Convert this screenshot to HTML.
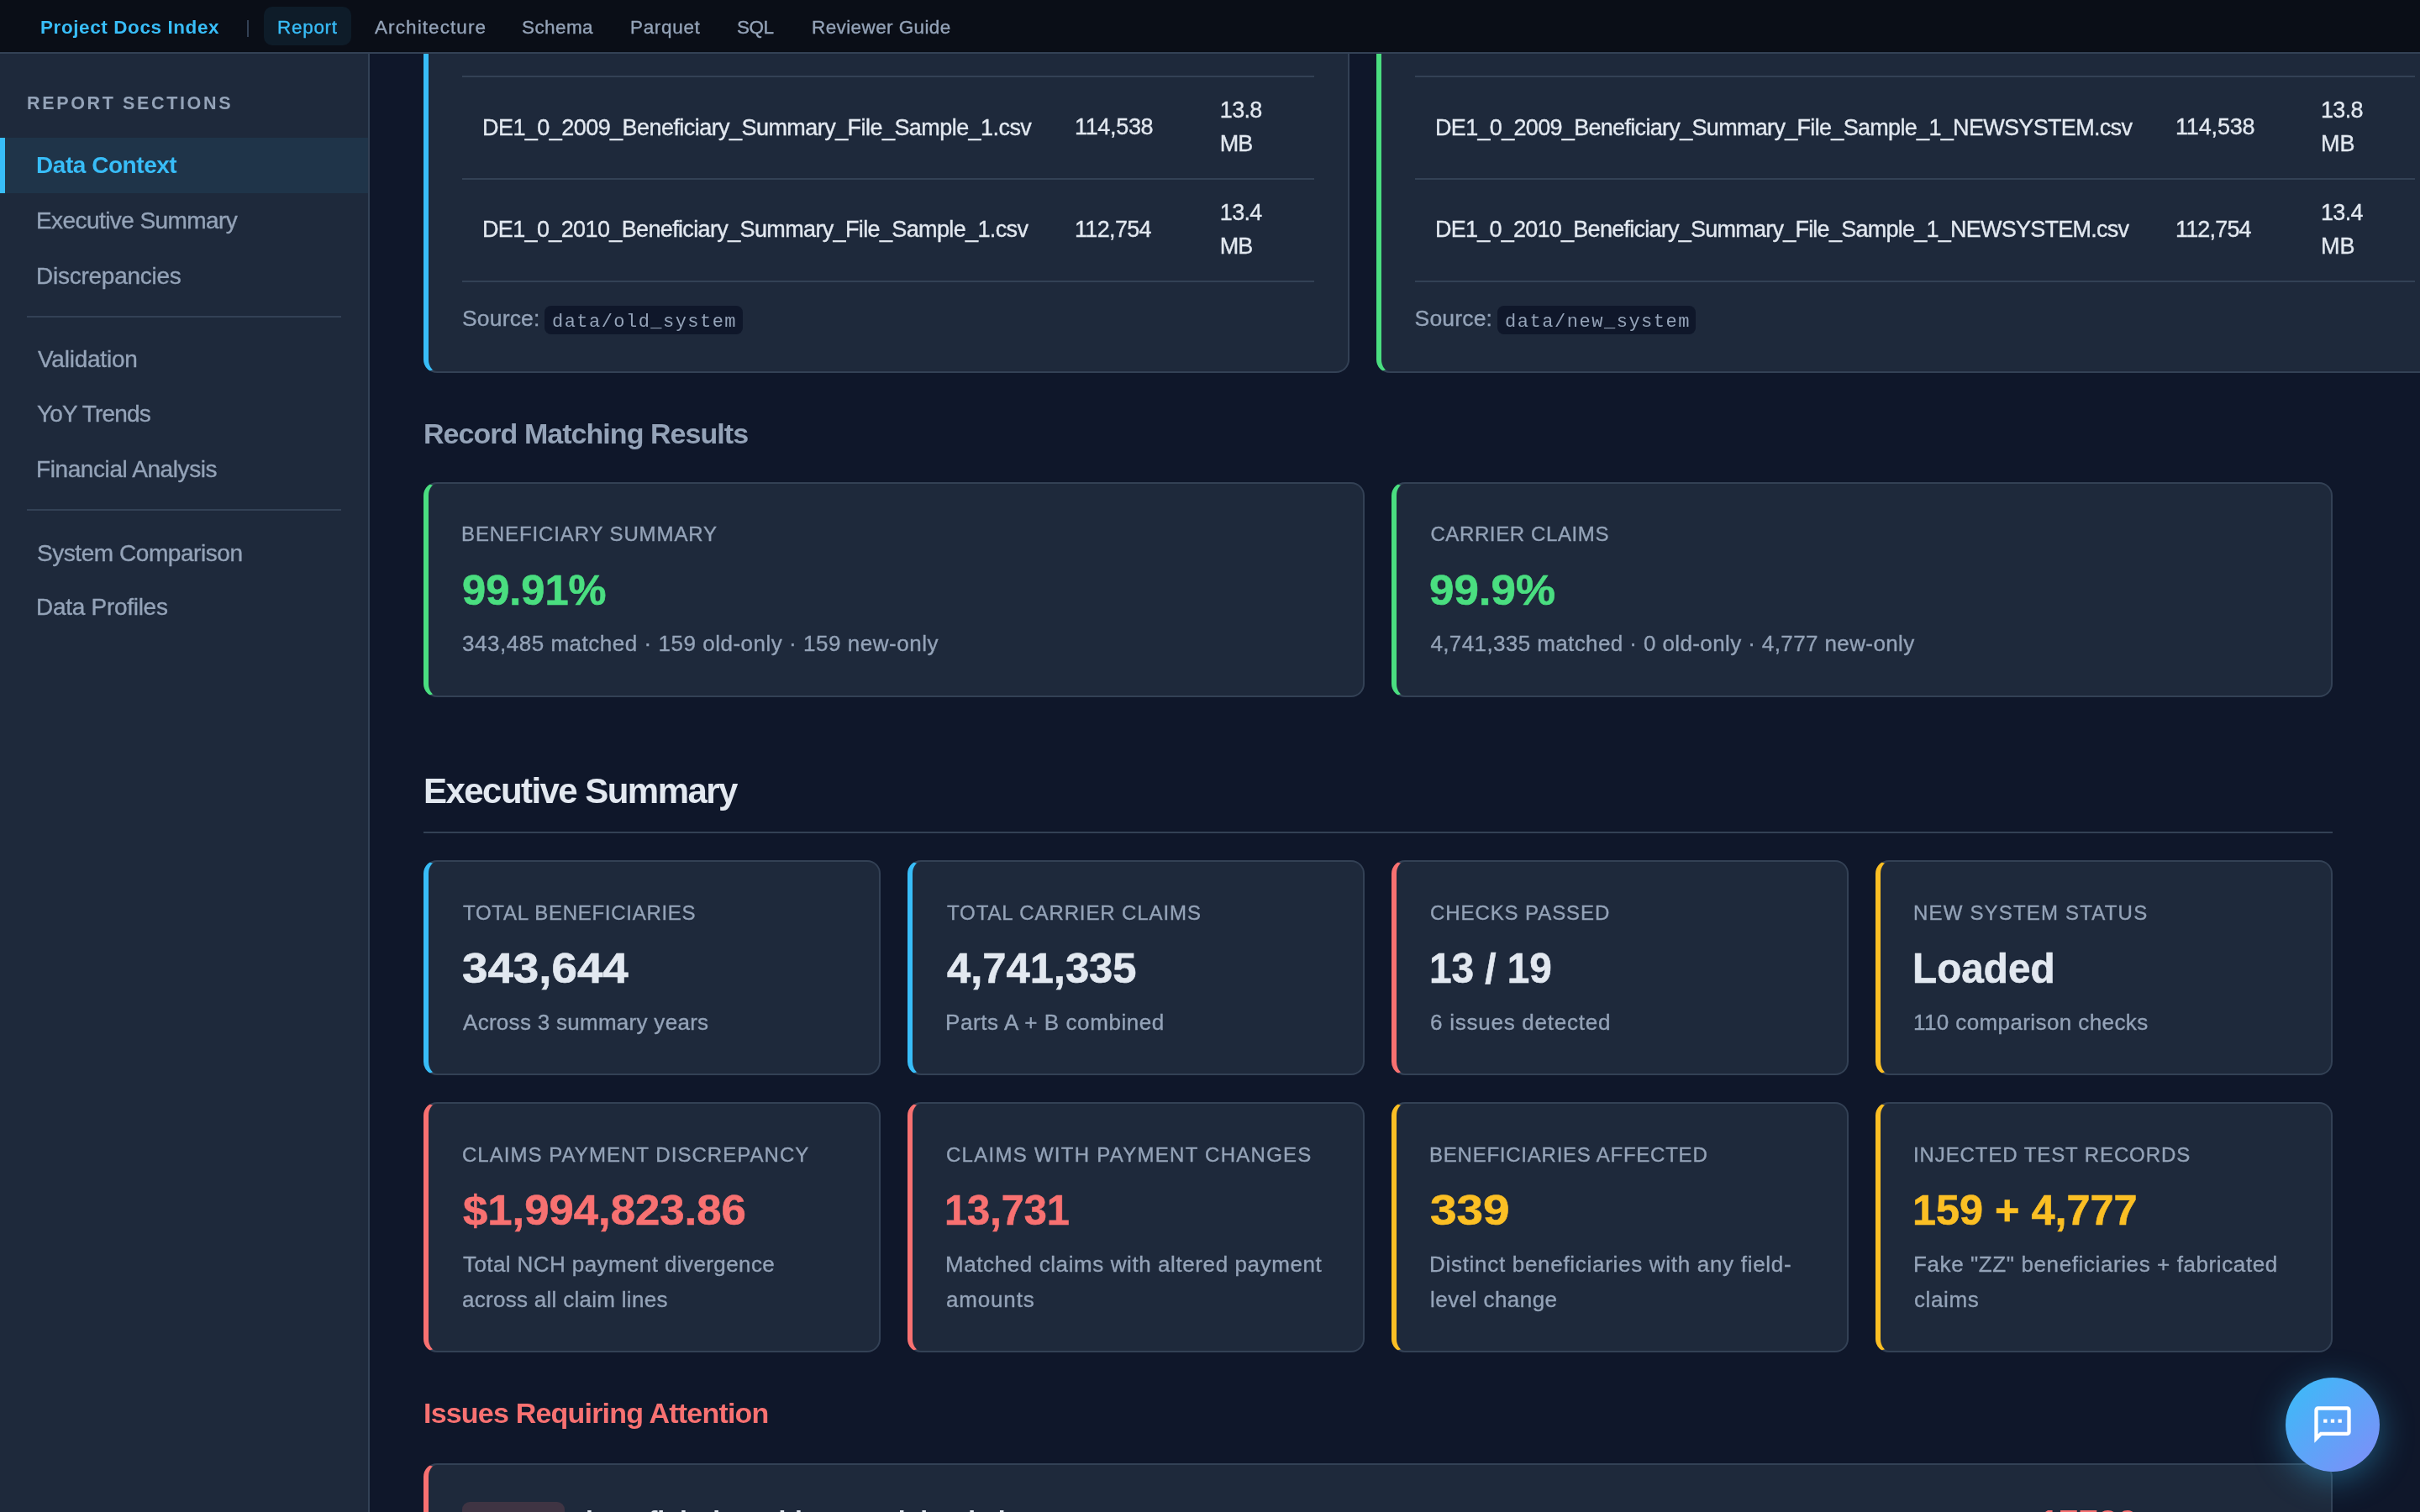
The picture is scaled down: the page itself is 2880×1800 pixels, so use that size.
<!DOCTYPE html>
<html><head><meta charset="utf-8"><title>Report</title>
<style>
html,body{margin:0;padding:0;width:2880px;height:1800px;overflow:hidden;background:#0f172a;}
@media (max-width:1600px){html{zoom:0.5;}}
body{position:relative;font-family:"Liberation Sans", sans-serif;}
.t{position:absolute;white-space:nowrap;line-height:1;}
.bl{display:inline-block;width:0;height:0;vertical-align:baseline;}
#main{position:absolute;left:440px;top:0;width:2440px;height:1800px;overflow:hidden;background:#0f172a;}
#mainin{position:absolute;left:-440px;top:0;width:2880px;height:1800px;}
.card{position:absolute;box-sizing:border-box;background:#1e293b;border:2px solid #334155;border-left:6px solid;border-radius:16px;}
.hl{position:absolute;height:2px;background:#334155;}
.code{position:absolute;background:#0f172a;border-radius:8px;}
#nav{position:absolute;left:0;top:0;width:2880px;height:62px;background:#0a0e17;border-bottom:2px solid #334155;z-index:5;}
#side{position:absolute;left:0;top:64px;width:438px;height:1736px;background:#1e293b;border-right:2px solid #334155;z-index:4;}
.pill{position:absolute;left:314px;top:8px;width:104px;height:46px;border-radius:10px;background:#0e1c29;}
.act{position:absolute;left:0;top:164px;width:438px;height:66px;background:#1f3449;}
.actbar{position:absolute;left:0;top:164px;width:6px;height:66px;background:#38bdf8;}
.div{position:absolute;left:32px;width:374px;height:2px;background:#334155;}
#fab{position:absolute;left:2720px;top:1640px;width:112px;height:112px;border-radius:56px;background:linear-gradient(135deg,#38bdf8,#818cf8);box-shadow:0 8px 40px rgba(56,189,248,0.4);z-index:10;}
#fab svg{position:absolute;left:30px;top:30px;width:52px;height:52px;}
</style></head><body>
<div id="mainwrap">
<div class="card" style="left:504px;top:0px;width:1102px;height:444px;border-left-color:#38bdf8;"></div>
<div class="card" style="left:1638px;top:0px;width:1278px;height:444px;border-left-color:#4ade80;"></div>
<div class="hl" style="left:550px;top:90px;width:1014px"></div>
<div class="hl" style="left:1684px;top:90px;width:1190px"></div>
<div class="hl" style="left:550px;top:212px;width:1014px"></div>
<div class="hl" style="left:1684px;top:212px;width:1190px"></div>
<div class="hl" style="left:550px;top:334px;width:1014px"></div>
<div class="hl" style="left:1684px;top:334px;width:1190px"></div>
<div class="code" style="left:648px;top:364px;width:236px;height:34px"></div>
<div class="code" style="left:1782px;top:364px;width:236px;height:34px"></div>
<div class="card" style="left:504px;top:574px;width:1120px;height:256px;border-left-color:#4ade80;"></div>
<div class="card" style="left:1656px;top:574px;width:1120px;height:256px;border-left-color:#4ade80;"></div>
<div class="hl" style="left:504px;top:990px;width:2272px"></div>
<div class="card" style="left:504px;top:1024px;width:544px;height:256px;border-left-color:#38bdf8;"></div>
<div class="card" style="left:1080px;top:1024px;width:544px;height:256px;border-left-color:#38bdf8;"></div>
<div class="card" style="left:1656px;top:1024px;width:544px;height:256px;border-left-color:#f87171;"></div>
<div class="card" style="left:2232px;top:1024px;width:544px;height:256px;border-left-color:#fbbf24;"></div>
<div class="card" style="left:504px;top:1312px;width:544px;height:298px;border-left-color:#f87171;"></div>
<div class="card" style="left:1080px;top:1312px;width:544px;height:298px;border-left-color:#f87171;"></div>
<div class="card" style="left:1656px;top:1312px;width:544px;height:298px;border-left-color:#fbbf24;"></div>
<div class="card" style="left:2232px;top:1312px;width:544px;height:298px;border-left-color:#fbbf24;"></div>
<div class="card" style="left:504px;top:1742px;width:2272px;height:200px;border-left-color:#f87171;"></div>
<div style="position:absolute;left:550px;top:1788px;width:122px;height:60px;border-radius:9px;background:#3f3443"></div>
</div>
<div id="nav"><div class="pill"></div><div style="position:absolute;left:294px;top:24px;width:2px;height:20px;background:#334155"></div></div>
<div id="side"></div>
<div class="act" style="z-index:6"></div><div class="actbar" style="z-index:6"></div>
<div class="div" style="top:376px;z-index:6"></div>
<div class="div" style="top:606px;z-index:6"></div>
<div id="texts" style="position:absolute;left:0;top:0;width:2880px;height:1800px;z-index:7;will-change:transform">
<div class="t" id="nav_brand" style="left:48.00px;top:22.00px;font-size:22.5px;font-weight:700;color:#38bdf8;letter-spacing:0.588px;transform:scaleX(1.0000);transform-origin:0 0;font-family:'Liberation Sans', sans-serif;">Project Docs Index<span class="bl"></span></div>
<div class="t" id="nav_report" style="left:330.00px;top:22.00px;font-size:22.5px;font-weight:400;color:#38bdf8;letter-spacing:0.700px;transform:scaleX(1.0000);transform-origin:0 0;font-family:'Liberation Sans', sans-serif;-webkit-text-stroke:0.35px #38bdf8;">Report<span class="bl"></span></div>
<div class="t" id="nav_arch" style="left:446.00px;top:22.00px;font-size:22.5px;font-weight:400;color:#94a3b8;letter-spacing:1.091px;transform:scaleX(1.0000);transform-origin:0 0;font-family:'Liberation Sans', sans-serif;-webkit-text-stroke:0.35px #94a3b8;">Architecture<span class="bl"></span></div>
<div class="t" id="nav_schema" style="left:621.00px;top:22.00px;font-size:22.5px;font-weight:400;color:#94a3b8;letter-spacing:0.400px;transform:scaleX(1.0000);transform-origin:0 0;font-family:'Liberation Sans', sans-serif;-webkit-text-stroke:0.35px #94a3b8;">Schema<span class="bl"></span></div>
<div class="t" id="nav_parquet" style="left:750.00px;top:22.00px;font-size:22.5px;font-weight:400;color:#94a3b8;letter-spacing:0.667px;transform:scaleX(1.0000);transform-origin:0 0;font-family:'Liberation Sans', sans-serif;-webkit-text-stroke:0.35px #94a3b8;">Parquet<span class="bl"></span></div>
<div class="t" id="nav_sql" style="left:877.00px;top:22.00px;font-size:22.5px;font-weight:400;color:#94a3b8;letter-spacing:-0.500px;transform:scaleX(1.0000);transform-origin:0 0;font-family:'Liberation Sans', sans-serif;-webkit-text-stroke:0.35px #94a3b8;">SQL<span class="bl"></span></div>
<div class="t" id="nav_guide" style="left:966.00px;top:22.00px;font-size:22.5px;font-weight:400;color:#94a3b8;letter-spacing:0.400px;transform:scaleX(1.0000);transform-origin:0 0;font-family:'Liberation Sans', sans-serif;-webkit-text-stroke:0.35px #94a3b8;">Reviewer Guide<span class="bl"></span></div>
<div class="t" id="sb_head" style="left:32.00px;top:113.20px;font-size:21.5px;font-weight:700;color:#94a3b8;letter-spacing:2.643px;transform:scaleX(1.0000);transform-origin:0 0;font-family:'Liberation Sans', sans-serif;">REPORT SECTIONS<span class="bl"></span></div>
<div class="t" id="sb_dc" style="left:43.00px;top:183.40px;font-size:28px;font-weight:700;color:#38bdf8;letter-spacing:-0.455px;transform:scaleX(1.0000);transform-origin:0 0;font-family:'Liberation Sans', sans-serif;">Data Context<span class="bl"></span></div>
<div class="t" id="sb_es" style="left:43.00px;top:249.31px;font-size:28px;font-weight:400;color:#94a3b8;letter-spacing:-0.569px;transform:scaleX(1.0000);transform-origin:0 0;font-family:'Liberation Sans', sans-serif;-webkit-text-stroke:0.35px #94a3b8;">Executive Summary<span class="bl"></span></div>
<div class="t" id="sb_disc" style="left:43.00px;top:314.81px;font-size:28px;font-weight:400;color:#94a3b8;letter-spacing:-0.250px;transform:scaleX(1.0000);transform-origin:0 0;font-family:'Liberation Sans', sans-serif;-webkit-text-stroke:0.35px #94a3b8;">Discrepancies<span class="bl"></span></div>
<div class="t" id="sb_val" style="left:45.00px;top:413.71px;font-size:28px;font-weight:400;color:#94a3b8;letter-spacing:-0.233px;transform:scaleX(1.0000);transform-origin:0 0;font-family:'Liberation Sans', sans-serif;-webkit-text-stroke:0.35px #94a3b8;">Validation<span class="bl"></span></div>
<div class="t" id="sb_yoy" style="left:44.00px;top:479.00px;font-size:28px;font-weight:400;color:#94a3b8;letter-spacing:-0.822px;transform:scaleX(1.0000);transform-origin:0 0;font-family:'Liberation Sans', sans-serif;-webkit-text-stroke:0.35px #94a3b8;">YoY Trends<span class="bl"></span></div>
<div class="t" id="sb_fin" style="left:43.00px;top:545.00px;font-size:28px;font-weight:400;color:#94a3b8;letter-spacing:-0.412px;transform:scaleX(1.0000);transform-origin:0 0;font-family:'Liberation Sans', sans-serif;-webkit-text-stroke:0.35px #94a3b8;">Financial Analysis<span class="bl"></span></div>
<div class="t" id="sb_sys" style="left:44.00px;top:644.60px;font-size:28px;font-weight:400;color:#94a3b8;letter-spacing:-0.444px;transform:scaleX(1.0000);transform-origin:0 0;font-family:'Liberation Sans', sans-serif;-webkit-text-stroke:0.35px #94a3b8;">System Comparison<span class="bl"></span></div>
<div class="t" id="sb_prof" style="left:43.00px;top:708.71px;font-size:28px;font-weight:400;color:#94a3b8;letter-spacing:-0.283px;transform:scaleX(1.0000);transform-origin:0 0;font-family:'Liberation Sans', sans-serif;-webkit-text-stroke:0.35px #94a3b8;">Data Profiles<span class="bl"></span></div>
<div class="t" id="a_f1" style="left:574.00px;top:138.50px;font-size:27px;font-weight:400;color:#e2e8f0;letter-spacing:-0.553px;transform:scaleX(1.0000);transform-origin:0 0;font-family:'Liberation Sans', sans-serif;-webkit-text-stroke:0.35px #e2e8f0;">DE1_0_2009_Beneficiary_Summary_File_Sample_1.csv<span class="bl"></span></div>
<div class="t" id="a_n1" style="left:1279.00px;top:138.31px;font-size:27px;font-weight:400;color:#e2e8f0;letter-spacing:-0.333px;transform:scaleX(1.0000);transform-origin:0 0;font-family:'Liberation Sans', sans-serif;-webkit-text-stroke:0.35px #e2e8f0;">114,538<span class="bl"></span></div>
<div class="t" id="a_s1" style="left:1451.80px;top:117.70px;font-size:27px;font-weight:400;color:#e2e8f0;letter-spacing:-0.667px;transform:scaleX(1.0000);transform-origin:0 0;font-family:'Liberation Sans', sans-serif;-webkit-text-stroke:0.35px #e2e8f0;">13.8<span class="bl"></span></div>
<div class="t" id="a_m1" style="left:1451.80px;top:157.81px;font-size:27px;font-weight:400;color:#e2e8f0;letter-spacing:-1.000px;transform:scaleX(1.0000);transform-origin:0 0;font-family:'Liberation Sans', sans-serif;-webkit-text-stroke:0.35px #e2e8f0;">MB<span class="bl"></span></div>
<div class="t" id="a_f2" style="left:574.00px;top:260.00px;font-size:27px;font-weight:400;color:#e2e8f0;letter-spacing:-0.638px;transform:scaleX(1.0000);transform-origin:0 0;font-family:'Liberation Sans', sans-serif;-webkit-text-stroke:0.35px #e2e8f0;">DE1_0_2010_Beneficiary_Summary_File_Sample_1.csv<span class="bl"></span></div>
<div class="t" id="a_n2" style="left:1279.00px;top:260.00px;font-size:27px;font-weight:400;color:#e2e8f0;letter-spacing:-0.667px;transform:scaleX(1.0000);transform-origin:0 0;font-family:'Liberation Sans', sans-serif;-webkit-text-stroke:0.35px #e2e8f0;">112,754<span class="bl"></span></div>
<div class="t" id="a_s2" style="left:1451.80px;top:240.00px;font-size:27px;font-weight:400;color:#e2e8f0;letter-spacing:-0.667px;transform:scaleX(1.0000);transform-origin:0 0;font-family:'Liberation Sans', sans-serif;-webkit-text-stroke:0.35px #e2e8f0;">13.4<span class="bl"></span></div>
<div class="t" id="a_m2" style="left:1451.80px;top:279.60px;font-size:27px;font-weight:400;color:#e2e8f0;letter-spacing:-1.000px;transform:scaleX(1.0000);transform-origin:0 0;font-family:'Liberation Sans', sans-serif;-webkit-text-stroke:0.35px #e2e8f0;">MB<span class="bl"></span></div>
<div class="t" id="a_src" style="left:550.00px;top:366.01px;font-size:26.5px;font-weight:400;color:#94a3b8;letter-spacing:0.167px;transform:scaleX(1.0000);transform-origin:0 0;font-family:'Liberation Sans', sans-serif;-webkit-text-stroke:0.35px #94a3b8;">Source:<span class="bl"></span></div>
<div class="t" id="a_code" style="left:657.00px;top:372.60px;font-size:22px;font-weight:400;color:#94a3b8;letter-spacing:1.464px;transform:scaleX(1.0000);transform-origin:0 0;font-family:'Liberation Mono', monospace;">data/old_system<span class="bl"></span></div>
<div class="t" id="b_f1" style="left:1708.00px;top:138.50px;font-size:27px;font-weight:400;color:#e2e8f0;letter-spacing:-0.684px;transform:scaleX(1.0000);transform-origin:0 0;font-family:'Liberation Sans', sans-serif;-webkit-text-stroke:0.35px #e2e8f0;">DE1_0_2009_Beneficiary_Summary_File_Sample_1_NEWSYSTEM.csv<span class="bl"></span></div>
<div class="t" id="b_n1" style="left:2589.00px;top:138.31px;font-size:27px;font-weight:400;color:#e2e8f0;letter-spacing:-0.167px;transform:scaleX(1.0000);transform-origin:0 0;font-family:'Liberation Sans', sans-serif;-webkit-text-stroke:0.35px #e2e8f0;">114,538<span class="bl"></span></div>
<div class="t" id="b_s1" style="left:2762.00px;top:117.70px;font-size:27px;font-weight:400;color:#e2e8f0;letter-spacing:-0.667px;transform:scaleX(1.0000);transform-origin:0 0;font-family:'Liberation Sans', sans-serif;-webkit-text-stroke:0.35px #e2e8f0;">13.8<span class="bl"></span></div>
<div class="t" id="b_m1" style="left:2762.00px;top:157.81px;font-size:27px;font-weight:400;color:#e2e8f0;letter-spacing:0.000px;transform:scaleX(1.0000);transform-origin:0 0;font-family:'Liberation Sans', sans-serif;-webkit-text-stroke:0.35px #e2e8f0;">MB<span class="bl"></span></div>
<div class="t" id="b_f2" style="left:1708.00px;top:260.00px;font-size:27px;font-weight:400;color:#e2e8f0;letter-spacing:-0.754px;transform:scaleX(1.0000);transform-origin:0 0;font-family:'Liberation Sans', sans-serif;-webkit-text-stroke:0.35px #e2e8f0;">DE1_0_2010_Beneficiary_Summary_File_Sample_1_NEWSYSTEM.csv<span class="bl"></span></div>
<div class="t" id="b_n2" style="left:2589.00px;top:260.00px;font-size:27px;font-weight:400;color:#e2e8f0;letter-spacing:-0.833px;transform:scaleX(1.0000);transform-origin:0 0;font-family:'Liberation Sans', sans-serif;-webkit-text-stroke:0.35px #e2e8f0;">112,754<span class="bl"></span></div>
<div class="t" id="b_s2" style="left:2762.00px;top:240.00px;font-size:27px;font-weight:400;color:#e2e8f0;letter-spacing:-0.667px;transform:scaleX(1.0000);transform-origin:0 0;font-family:'Liberation Sans', sans-serif;-webkit-text-stroke:0.35px #e2e8f0;">13.4<span class="bl"></span></div>
<div class="t" id="b_m2" style="left:2762.00px;top:279.60px;font-size:27px;font-weight:400;color:#e2e8f0;letter-spacing:0.000px;transform:scaleX(1.0000);transform-origin:0 0;font-family:'Liberation Sans', sans-serif;-webkit-text-stroke:0.35px #e2e8f0;">MB<span class="bl"></span></div>
<div class="t" id="b_src" style="left:1683.60px;top:366.01px;font-size:26.5px;font-weight:400;color:#94a3b8;letter-spacing:0.167px;transform:scaleX(1.0000);transform-origin:0 0;font-family:'Liberation Sans', sans-serif;-webkit-text-stroke:0.35px #94a3b8;">Source:<span class="bl"></span></div>
<div class="t" id="b_code" style="left:1791.00px;top:372.60px;font-size:22px;font-weight:400;color:#94a3b8;letter-spacing:1.536px;transform:scaleX(1.0000);transform-origin:0 0;font-family:'Liberation Mono', monospace;">data/new_system<span class="bl"></span></div>
<div class="t" id="rm_head" style="left:504.00px;top:499.00px;font-size:34px;font-weight:700;color:#94a3b8;letter-spacing:-0.955px;transform:scaleX(1.0000);transform-origin:0 0;font-family:'Liberation Sans', sans-serif;">Record Matching Results<span class="bl"></span></div>
<div class="t" id="rm1_l" style="left:549.00px;top:624.40px;font-size:24px;font-weight:400;color:#94a3b8;letter-spacing:0.889px;transform:scaleX(1.0000);transform-origin:0 0;font-family:'Liberation Sans', sans-serif;-webkit-text-stroke:0.35px #94a3b8;">BENEFICIARY SUMMARY<span class="bl"></span></div>
<div class="t" id="rm1_n" style="left:550.00px;top:678.41px;font-size:50px;font-weight:700;color:#4ade80;letter-spacing:0.000px;transform:scaleX(1.0119);transform-origin:0 0;font-family:'Liberation Sans', sans-serif;-webkit-text-stroke:0.6px #4ade80;">99.91%<span class="bl"></span></div>
<div class="t" id="rm1_s" style="left:550.00px;top:753.31px;font-size:26px;font-weight:400;color:#94a3b8;letter-spacing:0.523px;transform:scaleX(1.0000);transform-origin:0 0;font-family:'Liberation Sans', sans-serif;-webkit-text-stroke:0.35px #94a3b8;">343,485 matched · 159 old-only · 159 new-only<span class="bl"></span></div>
<div class="t" id="rm2_l" style="left:1702.40px;top:624.40px;font-size:24px;font-weight:400;color:#94a3b8;letter-spacing:0.615px;transform:scaleX(1.0000);transform-origin:0 0;font-family:'Liberation Sans', sans-serif;-webkit-text-stroke:0.35px #94a3b8;">CARRIER CLAIMS<span class="bl"></span></div>
<div class="t" id="rm2_n" style="left:1701.40px;top:678.41px;font-size:50px;font-weight:700;color:#4ade80;letter-spacing:0.000px;transform:scaleX(1.0572);transform-origin:0 0;font-family:'Liberation Sans', sans-serif;-webkit-text-stroke:0.6px #4ade80;">99.9%<span class="bl"></span></div>
<div class="t" id="rm2_s" style="left:1702.40px;top:753.31px;font-size:26px;font-weight:400;color:#94a3b8;letter-spacing:0.391px;transform:scaleX(1.0000);transform-origin:0 0;font-family:'Liberation Sans', sans-serif;-webkit-text-stroke:0.35px #94a3b8;">4,741,335 matched · 0 old-only · 4,777 new-only<span class="bl"></span></div>
<div class="t" id="es_head" style="left:504.00px;top:921.01px;font-size:42px;font-weight:700;color:#e2e8f0;letter-spacing:-1.550px;transform:scaleX(1.0000);transform-origin:0 0;font-family:'Liberation Sans', sans-serif;">Executive Summary<span class="bl"></span></div>
<div class="t" id="c0_l" style="left:551.00px;top:1074.61px;font-size:24px;font-weight:400;color:#94a3b8;letter-spacing:0.722px;transform:scaleX(1.0000);transform-origin:0 0;font-family:'Liberation Sans', sans-serif;-webkit-text-stroke:0.35px #94a3b8;">TOTAL BENEFICIARIES<span class="bl"></span></div>
<div class="t" id="c0_n" style="left:550.00px;top:1128.20px;font-size:50px;font-weight:700;color:#e2e8f0;letter-spacing:0.000px;transform:scaleX(1.0940);transform-origin:0 0;font-family:'Liberation Sans', sans-serif;-webkit-text-stroke:0.6px #e2e8f0;">343,644<span class="bl"></span></div>
<div class="t" id="c0_s0" style="left:551.00px;top:1204.01px;font-size:26px;font-weight:400;color:#94a3b8;letter-spacing:0.286px;transform:scaleX(1.0000);transform-origin:0 0;font-family:'Liberation Sans', sans-serif;-webkit-text-stroke:0.35px #94a3b8;">Across 3 summary years<span class="bl"></span></div>
<div class="t" id="c1_l" style="left:1127.00px;top:1074.61px;font-size:24px;font-weight:400;color:#94a3b8;letter-spacing:0.895px;transform:scaleX(1.0000);transform-origin:0 0;font-family:'Liberation Sans', sans-serif;-webkit-text-stroke:0.35px #94a3b8;">TOTAL CARRIER CLAIMS<span class="bl"></span></div>
<div class="t" id="c1_n" style="left:1127.00px;top:1128.20px;font-size:50px;font-weight:700;color:#e2e8f0;letter-spacing:0.000px;transform:scaleX(1.0135);transform-origin:0 0;font-family:'Liberation Sans', sans-serif;-webkit-text-stroke:0.6px #e2e8f0;">4,741,335<span class="bl"></span></div>
<div class="t" id="c1_s0" style="left:1125.00px;top:1204.01px;font-size:26px;font-weight:400;color:#94a3b8;letter-spacing:0.579px;transform:scaleX(1.0000);transform-origin:0 0;font-family:'Liberation Sans', sans-serif;-webkit-text-stroke:0.35px #94a3b8;">Parts A + B combined<span class="bl"></span></div>
<div class="t" id="c2_l" style="left:1702.00px;top:1074.61px;font-size:24px;font-weight:400;color:#94a3b8;letter-spacing:0.917px;transform:scaleX(1.0000);transform-origin:0 0;font-family:'Liberation Sans', sans-serif;-webkit-text-stroke:0.35px #94a3b8;">CHECKS PASSED<span class="bl"></span></div>
<div class="t" id="c2_n" style="left:1701.00px;top:1128.20px;font-size:50px;font-weight:700;color:#e2e8f0;letter-spacing:0.000px;transform:scaleX(0.9538);transform-origin:0 0;font-family:'Liberation Sans', sans-serif;-webkit-text-stroke:0.6px #e2e8f0;">13 / 19<span class="bl"></span></div>
<div class="t" id="c2_s0" style="left:1702.00px;top:1204.01px;font-size:26px;font-weight:400;color:#94a3b8;letter-spacing:0.750px;transform:scaleX(1.0000);transform-origin:0 0;font-family:'Liberation Sans', sans-serif;-webkit-text-stroke:0.35px #94a3b8;">6 issues detected<span class="bl"></span></div>
<div class="t" id="c3_l" style="left:2277.00px;top:1074.61px;font-size:24px;font-weight:400;color:#94a3b8;letter-spacing:1.188px;transform:scaleX(1.0000);transform-origin:0 0;font-family:'Liberation Sans', sans-serif;-webkit-text-stroke:0.35px #94a3b8;">NEW SYSTEM STATUS<span class="bl"></span></div>
<div class="t" id="c3_n" style="left:2276.00px;top:1128.20px;font-size:50px;font-weight:700;color:#e2e8f0;letter-spacing:0.000px;transform:scaleX(0.9538);transform-origin:0 0;font-family:'Liberation Sans', sans-serif;-webkit-text-stroke:0.6px #e2e8f0;">Loaded<span class="bl"></span></div>
<div class="t" id="c3_s0" style="left:2277.00px;top:1204.01px;font-size:26px;font-weight:400;color:#94a3b8;letter-spacing:0.400px;transform:scaleX(1.0000);transform-origin:0 0;font-family:'Liberation Sans', sans-serif;-webkit-text-stroke:0.35px #94a3b8;">110 comparison checks<span class="bl"></span></div>
<div class="t" id="c4_l" style="left:550.00px;top:1362.61px;font-size:24px;font-weight:400;color:#94a3b8;letter-spacing:1.040px;transform:scaleX(1.0000);transform-origin:0 0;font-family:'Liberation Sans', sans-serif;-webkit-text-stroke:0.35px #94a3b8;">CLAIMS PAYMENT DISCREPANCY<span class="bl"></span></div>
<div class="t" id="c4_n" style="left:551.00px;top:1416.20px;font-size:50px;font-weight:700;color:#f87171;letter-spacing:0.000px;transform:scaleX(1.0533);transform-origin:0 0;font-family:'Liberation Sans', sans-serif;-webkit-text-stroke:0.6px #f87171;">$1,994,823.86<span class="bl"></span></div>
<div class="t" id="c4_s0" style="left:551.00px;top:1492.01px;font-size:26px;font-weight:400;color:#94a3b8;letter-spacing:0.407px;transform:scaleX(1.0000);transform-origin:0 0;font-family:'Liberation Sans', sans-serif;-webkit-text-stroke:0.35px #94a3b8;">Total NCH payment divergence<span class="bl"></span></div>
<div class="t" id="c4_s1" style="left:550.00px;top:1534.01px;font-size:26px;font-weight:400;color:#94a3b8;letter-spacing:0.286px;transform:scaleX(1.0000);transform-origin:0 0;font-family:'Liberation Sans', sans-serif;-webkit-text-stroke:0.35px #94a3b8;">across all claim lines<span class="bl"></span></div>
<div class="t" id="c5_l" style="left:1126.00px;top:1362.61px;font-size:24px;font-weight:400;color:#94a3b8;letter-spacing:1.269px;transform:scaleX(1.0000);transform-origin:0 0;font-family:'Liberation Sans', sans-serif;-webkit-text-stroke:0.35px #94a3b8;">CLAIMS WITH PAYMENT CHANGES<span class="bl"></span></div>
<div class="t" id="c5_n" style="left:1124.00px;top:1416.20px;font-size:50px;font-weight:700;color:#f87171;letter-spacing:0.000px;transform:scaleX(0.9734);transform-origin:0 0;font-family:'Liberation Sans', sans-serif;-webkit-text-stroke:0.6px #f87171;">13,731<span class="bl"></span></div>
<div class="t" id="c5_s0" style="left:1125.00px;top:1492.01px;font-size:26px;font-weight:400;color:#94a3b8;letter-spacing:0.588px;transform:scaleX(1.0000);transform-origin:0 0;font-family:'Liberation Sans', sans-serif;-webkit-text-stroke:0.35px #94a3b8;">Matched claims with altered payment<span class="bl"></span></div>
<div class="t" id="c5_s1" style="left:1126.00px;top:1534.01px;font-size:26px;font-weight:400;color:#94a3b8;letter-spacing:0.833px;transform:scaleX(1.0000);transform-origin:0 0;font-family:'Liberation Sans', sans-serif;-webkit-text-stroke:0.35px #94a3b8;">amounts<span class="bl"></span></div>
<div class="t" id="c6_l" style="left:1701.00px;top:1362.61px;font-size:24px;font-weight:400;color:#94a3b8;letter-spacing:0.762px;transform:scaleX(1.0000);transform-origin:0 0;font-family:'Liberation Sans', sans-serif;-webkit-text-stroke:0.35px #94a3b8;">BENEFICIARIES AFFECTED<span class="bl"></span></div>
<div class="t" id="c6_n" style="left:1702.00px;top:1416.20px;font-size:50px;font-weight:700;color:#fbbf24;letter-spacing:0.000px;transform:scaleX(1.1343);transform-origin:0 0;font-family:'Liberation Sans', sans-serif;-webkit-text-stroke:0.6px #fbbf24;">339<span class="bl"></span></div>
<div class="t" id="c6_s0" style="left:1701.00px;top:1492.01px;font-size:26px;font-weight:400;color:#94a3b8;letter-spacing:0.703px;transform:scaleX(1.0000);transform-origin:0 0;font-family:'Liberation Sans', sans-serif;-webkit-text-stroke:0.35px #94a3b8;">Distinct beneficiaries with any field-<span class="bl"></span></div>
<div class="t" id="c6_s1" style="left:1702.00px;top:1534.01px;font-size:26px;font-weight:400;color:#94a3b8;letter-spacing:0.455px;transform:scaleX(1.0000);transform-origin:0 0;font-family:'Liberation Sans', sans-serif;-webkit-text-stroke:0.35px #94a3b8;">level change<span class="bl"></span></div>
<div class="t" id="c7_l" style="left:2277.00px;top:1362.61px;font-size:24px;font-weight:400;color:#94a3b8;letter-spacing:0.900px;transform:scaleX(1.0000);transform-origin:0 0;font-family:'Liberation Sans', sans-serif;-webkit-text-stroke:0.35px #94a3b8;">INJECTED TEST RECORDS<span class="bl"></span></div>
<div class="t" id="c7_n" style="left:2276.00px;top:1416.20px;font-size:50px;font-weight:700;color:#fbbf24;letter-spacing:0.000px;transform:scaleX(1.0076);transform-origin:0 0;font-family:'Liberation Sans', sans-serif;-webkit-text-stroke:0.6px #fbbf24;">159 + 4,777<span class="bl"></span></div>
<div class="t" id="c7_s0" style="left:2277.00px;top:1492.01px;font-size:26px;font-weight:400;color:#94a3b8;letter-spacing:0.600px;transform:scaleX(1.0000);transform-origin:0 0;font-family:'Liberation Sans', sans-serif;-webkit-text-stroke:0.35px #94a3b8;">Fake "ZZ" beneficiaries + fabricated<span class="bl"></span></div>
<div class="t" id="c7_s1" style="left:2278.00px;top:1534.01px;font-size:26px;font-weight:400;color:#94a3b8;letter-spacing:0.600px;transform:scaleX(1.0000);transform-origin:0 0;font-family:'Liberation Sans', sans-serif;-webkit-text-stroke:0.35px #94a3b8;">claims<span class="bl"></span></div>
<div class="t" id="is_head" style="left:504.00px;top:1665.21px;font-size:34px;font-weight:700;color:#f87171;letter-spacing:-0.800px;transform:scaleX(1.0000);transform-origin:0 0;font-family:'Liberation Sans', sans-serif;">Issues Requiring Attention<span class="bl"></span></div>
<div class="t" id="is_title" style="left:697.00px;top:1793.60px;font-size:32px;font-weight:700;color:#e2e8f0;letter-spacing:0.000px;transform:scaleX(1.0000);transform-origin:0 0;font-family:'Liberation Sans', sans-serif;">beneficiaries with unexplained changes<span class="bl"></span></div>
<div class="t" id="is_num" style="left:2427.00px;top:1792.01px;font-size:42px;font-weight:700;color:#f87171;letter-spacing:0.000px;transform:scaleX(1.0000);transform-origin:0 0;font-family:'Liberation Sans', sans-serif;">17739<span class="bl"></span></div>
</div>
<div id="fab"><svg viewBox="0 0 24 24"><path fill="#fff" d="M20 2H4c-1.1 0-1.99.9-1.99 2L2 22l4-4h14c1.1 0 2-.9 2-2V4c0-1.1-.9-2-2-2zm0 14H5.17L4 17.17V4h16v12zM7 9h2v2H7zm4 0h2v2h-2zm4 0h2v2h-2z"/></svg></div>
</body></html>
